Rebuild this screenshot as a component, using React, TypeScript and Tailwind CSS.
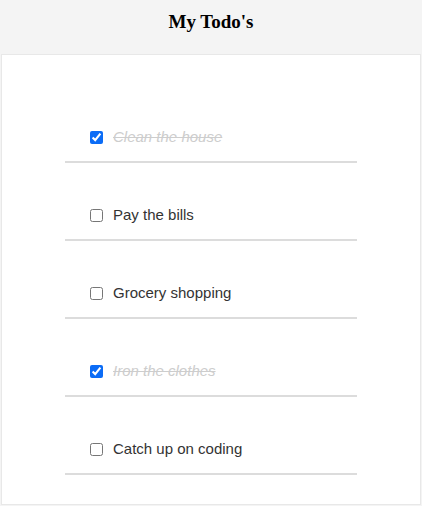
import { useState } from "react";

const initial = [
  { id: 1, text: "Clean the house", done: true },
  { id: 2, text: "Pay the bills", done: false },
  { id: 3, text: "Grocery shopping", done: false },
  { id: 4, text: "Iron the clothes", done: true },
  { id: 5, text: "Catch up on coding", done: false },
];

export default function App() {
  const [todos, setTodos] = useState(initial);

  function toggle(id: number) {
    setTodos(todos.map((t) => (t.id === id ? { ...t, done: !t.done } : t)));
  }

  return (
    <div className="min-h-[506px] bg-[#f4f4f4] pb-px">
      <header className="h-[54px] flex justify-center pt-[10px]">
        <h1 className="text-[19px] leading-[24px] font-bold text-black [font-family:'Liberation_Serif',serif]">My Todo's</h1>
      </header>
      <div className="mx-px bg-white border border-[#e8e8e8] pt-[30px] pb-[29px]">
        <ul className="w-[292px] mx-auto [font-family:'Liberation_Sans',Arial,sans-serif]">
          {todos.map((t) => (
            <li
              key={t.id}
              className="flex items-center h-[78px] pt-[28px] pl-[25px] border-b-2 border-[#dcdcdc]"
            >
              <input
                type="checkbox"
                checked={t.done}
                onChange={() => toggle(t.id)}
                className="w-[13px] h-[13px] m-0 accent-[#0b6cf6]"
              />
              <span
                className={
                  t.done
                    ? "ml-[10px] text-[15px] italic line-through text-[#cdcdcd]"
                    : "ml-[10px] text-[15px] text-[#333]"
                }
              >
                {t.text}
              </span>
            </li>
          ))}
        </ul>
      </div>
    </div>
  );
}
